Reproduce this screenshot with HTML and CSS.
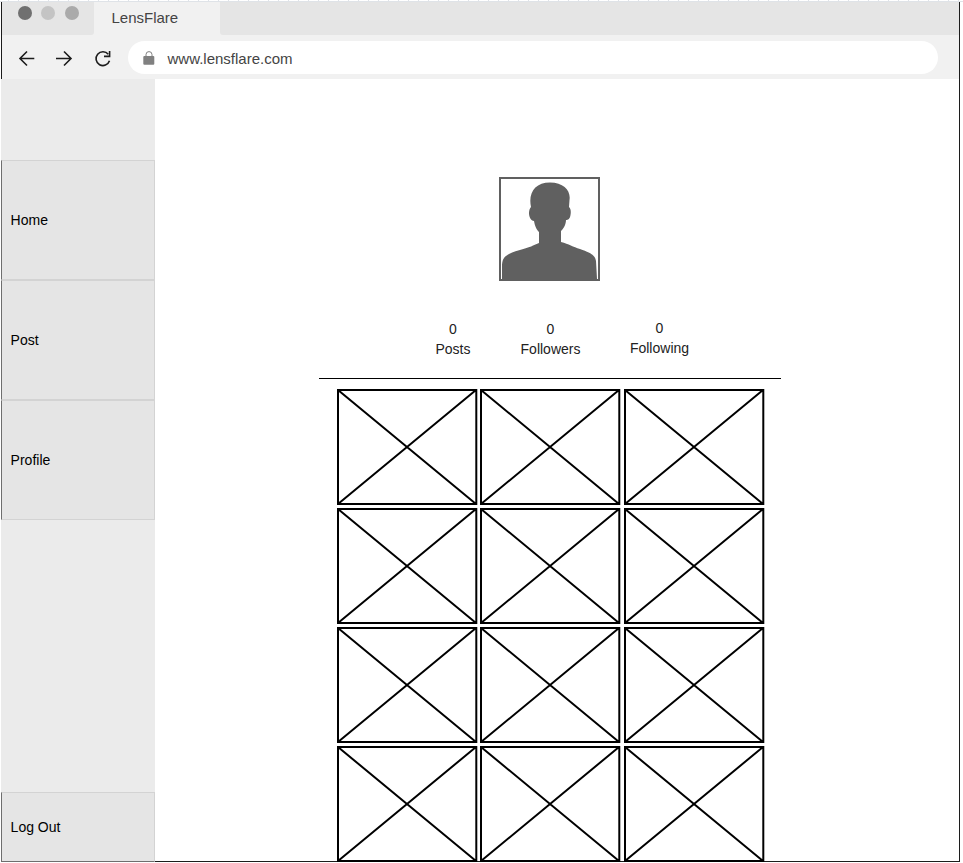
FILE: index.html
```
<!DOCTYPE html>
<html lang="en">
<head>
<meta charset="utf-8">
<title>LensFlare</title>
<link rel="stylesheet" href="styles.css">
</head>
<body>
<svg width="0" height="0" class="defs">
  <symbol id="photo" viewBox="0 0 141 116">
    <path d="M1 1H139.300V115H1ZM1 1L139 115M139 1L1 115" fill="none" stroke="#000" stroke-width="2"/>
  </symbol>
</svg>
<div class="ruler"></div>
<div class="window">
  <header class="chrome">
    <div class="tabs">
      <div class="lights"><i class="dot dark"></i><i class="dot light"></i><i class="dot mid"></i></div>
      <div class="tab">LensFlare</div>
      <div class="tab-rest"></div>
    </div>
    <div class="toolbar">
      <svg class="nav-icons" width="110" height="44" viewBox="0 0 110 44" fill="none" stroke="#1c1c1c" stroke-width="1.600">
        <path d="M32.300 23.500H18.500M25 16.500L18 23.500L25 30.500"/>
        <path d="M54 23.500H68.500M62 16.500L69 23.500L62 30.500"/>
        <path d="M106.300 19.300A6.900 6.900 0 1 0 107.500 25.800"/>
        <path d="M107.600 16V21.400H102"/>
      </svg>
      <div class="address">
        <svg width="12" height="14" viewBox="0 0 12 14"><path d="M3 6V3.6a3 3 0 0 1 6 0V6" fill="none" stroke="#808080" stroke-width="1"/><rect x=".3" y="5" width="11" height="8.700" rx="1" fill="#808080"/></svg>
        <span>www.lensflare.com</span>
      </div>
    </div>
  </header>
  <div class="body">
    <nav class="sidebar">
      <a class="item">Home</a>
      <a class="item">Post</a>
      <a class="item">Profile</a>
      <a class="item logout">Log Out</a>
    </nav>
    <main class="profile">
      <svg class="avatar" width="101" height="104" viewBox="0 0 101 104">
        <rect x="1" y="1" width="99" height="102" fill="#fff" stroke="#606060" stroke-width="2"/>
        <path fill="#606060" d="M3 102V90C3 83 4.500 80 10 77C18 73 30 71 34 68.500L40 66V55C38 53 36 50 35 44C32 44 30 40 30 36C30 33 31 31 32 30C29 16 36 5.500 51 5.500C65 5.500 72 14 70.500 23L70 30C72 32 72 35 71.500 38C71 42 69 43 67 43C67 48 64 52 62 54V65C70 67 74 70 81 72C92 76 96 78 97 84L98 102Z"/>
      </svg>
      <div class="stats">
        <div class="stat posts">0<br>Posts</div>
        <div class="stat followers">0<br>Followers</div>
        <div class="stat following">0<br>Following</div>
      </div>
      <hr>
      <div class="grid">
        <svg><use href="#photo"/></svg><svg><use href="#photo"/></svg><svg><use href="#photo"/></svg>
        <svg><use href="#photo"/></svg><svg><use href="#photo"/></svg><svg><use href="#photo"/></svg>
        <svg><use href="#photo"/></svg><svg><use href="#photo"/></svg><svg><use href="#photo"/></svg>
        <svg><use href="#photo"/></svg><svg><use href="#photo"/></svg><svg><use href="#photo"/></svg>
      </div>
    </main>
  </div>
</div>
</body>
</html>
```
FILE: styles.css
```
* { box-sizing: border-box; }
html, body { margin: 0; background: #fff; }
body { height: 863px; overflow: hidden; font: 14px/20px "Liberation Sans", Arial, sans-serif; color: #000; }
svg { display: block; flex: none; }
.defs { position: absolute; }
.ruler {
  height: 2px;
  border-bottom: 1px solid #dfe3e8;
  background: repeating-linear-gradient(90deg, transparent 0 8px, #dfe3e8 8px 9px, transparent 9px 10px);
}
.window { width: 959px; height: 860px; margin-left: 1px; border: 1px solid #1c1c1c; border-top: 0; }
.chrome { height: 77px; background: #f1f1f1; }
.tabs { display: flex; height: 33px; background: #f1f1f1; }
.lights { display: flex; gap: 9.700px; width: 92px; padding: 4px 0 0 15.500px; background: #e5e5e5; border-bottom-right-radius: 3px; }
.dot { width: 14px; height: 14px; border-radius: 50%; }
.dark { background: #707070; }
.light { background: #c4c4c4; }
.mid { background: #aaa; }
.tab { width: 126px; padding: 6px 0 0 17.500px; font-size: 15px; color: #444; }
.tab-rest { flex: 1; background: #e5e5e5; border-bottom-left-radius: 3px; }
.toolbar { display: flex; height: 44px; align-items: flex-start; }
.nav-icons { margin-right: 15.500px; }
.address { display: flex; width: 810px; height: 33px; margin-top: 6px; padding-left: 15px; align-items: center; gap: 13px; border-radius: 17px; background: #fff; font-size: 15px; color: #444; }
.address span { padding-top: 3px; }
.body { display: flex; height: 783px; margin-left: -1px; }
.sidebar { display: flex; flex-direction: column; width: 154px; height: 783px; padding-top: 81px; background: #ebebeb; }
.item { display: flex; height: 120px; padding-left: 8.600px; align-items: center; border: 1px solid #d3d3d3; border-left-color: #6e6e6e; background: #e5e5e5; }
.logout { height: 70px; margin-top: auto; border-bottom-color: #6e6e6e; }
.profile { flex: 1; padding-top: 98px; }
.avatar { margin-left: 344px; }
.stats { display: flex; height: 97px; padding-top: 38px; color: #222; text-align: center; }
.stat { flex: none; }
.posts { width: 60px; margin-left: 268px; }
.followers { width: 80px; margin-left: 27.500px; }
.following { width: 80px; margin: -1px 0 0 29px; }
hr { width: 462px; height: 1px; margin: 0 0 0 164px; border: 0; background: #000; }
.grid { display: grid; grid-template-columns: 143px 144px 141px; grid-auto-rows: 116px; row-gap: 3px; margin: 10px 0 0 182px; }
.grid svg { width: 141px; height: 116px; }
```
